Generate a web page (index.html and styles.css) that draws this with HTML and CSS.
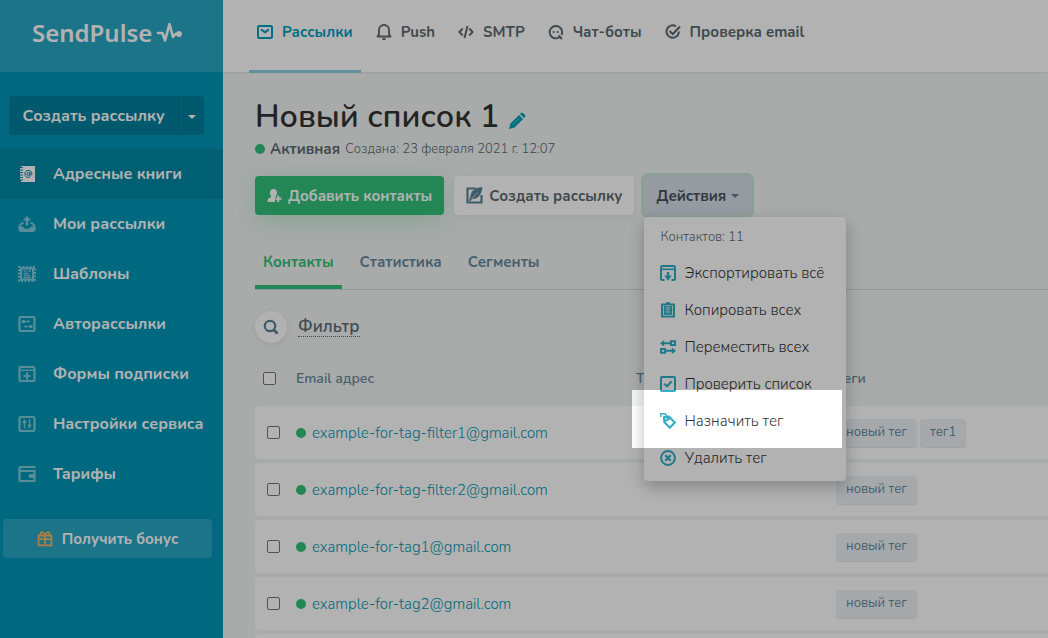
FILE: index.html
```html
<!DOCTYPE html>
<html lang="ru">
<head>
    <meta charset="UTF-8">
    <meta name="viewport" content="width=device-width, initial-scale=1.0">
    <title>Новый список 1</title>
    <link rel="stylesheet" href="styles.css">
</head>
<body>
    <div class="layout">
        <aside class="sidebar">
            <a class="logo" href="#">
                <span>SendPulse</span>
                <svg width="26" height="24" viewBox="0 0 26 24" fill="none" stroke="currentColor" stroke-width="2.600" stroke-linejoin="round" stroke-linecap="round"><path d="M2 12h4.500l2.500 7.500L13.500 3l3.500 13 2.500-3h3"/><circle cx="23" cy="13" r="1.600" fill="currentColor"/></svg>
            </a>
            <div class="create">
                <button class="create-main">Создать рассылку</button>
                <button class="create-more" aria-label="Ещё"><span class="caret"></span></button>
            </div>
            <nav class="menu">
                <a class="menu-item active" href="#">
                    <svg width="18" height="16" viewBox="0 0 18 16"><path fill="currentColor" d="M3 0h14v16H3v-1.500h2v-1H2V12h3v-1H2V9.500h3v-1H2V7h3V6H2V4.500h3v-1H2V2h3V1H3z"/><g fill="none" stroke="#0088a4" stroke-width="1"><circle cx="10.500" cy="8" r="1.500"/><path d="M12 6.300v2.200c0 1.200 1.900 1 1.900-.6a3.500 3.500 0 1 0-1.500 2.900"/></g></svg>
                    Адресные книги
                </a>
                <a class="menu-item" href="#">
                    <svg width="18" height="16" viewBox="0 0 18 16" fill="none" stroke="currentColor"><path stroke-width="2.500" d="M9 9.500V3"/><path fill="currentColor" stroke="none" d="M9 0l4.200 4.500H4.800z"/><path stroke-width="2" stroke-linejoin="round" d="M5.500 6.800C3 7.300 1.300 10 1.200 12c0 2 1 3 2.500 3h10.600c1.500 0 2.500-1 2.500-3-.1-2-1.800-4.700-4.300-5.200"/><path fill="currentColor" stroke="none" d="M1.500 10.500H5c1 2 2 2.200 4 2.200s3-.2 4-2.200h3.500V15h-15z"/></svg>
                    Мои рассылки
                </a>
                <a class="menu-item" href="#">
                    <svg width="18" height="16" viewBox="0 0 18 16" fill="none" stroke="currentColor"><path stroke-width="2" stroke-dasharray="2 1.500" d="M1 1h16v14H1z"/><path stroke-width="2" d="M3 2.500h12v11H3z"/><path stroke-width="1.300" d="M5.500 5.200h3M10 5.200h3M5.500 7.300h5M5.500 9.300h7M5.500 11.300h7.500"/></svg>
                    Шаблоны
                </a>
                <a class="menu-item" href="#">
                    <svg width="18" height="16" viewBox="0 0 18 16" fill="none" stroke="currentColor"><rect x="1.500" y="1" width="15" height="14" rx="1.500" stroke-width="2.200"/><path stroke-width="1.200" d="M5 5.500h6M7 10.500h6"/><path fill="currentColor" stroke="none" d="M4 4h3v3H4zM9.500 4l3 1.500-3 1.500zM11.500 9h3v3h-3zM8.500 9L5.500 10.500l3 1.500z"/></svg>
                    Авторассылки
                </a>
                <a class="menu-item" href="#">
                    <svg width="18" height="16" viewBox="0 0 18 16" fill="none" stroke="currentColor"><rect x="1.500" y="1" width="15" height="14" rx="1.500" stroke-width="2.200"/><path stroke-width="1.400" d="M2 4.300h14"/><path stroke-width="2.200" d="M9 6.500v7M5.500 10h7"/></svg>
                    Формы подписки
                </a>
                <a class="menu-item" href="#">
                    <svg width="18" height="16" viewBox="0 0 18 16" fill="none" stroke="currentColor"><rect x="1.500" y="1" width="15" height="14" rx="1.500" stroke-width="2.200"/><path stroke-width="1.400" d="M6.500 3.500v9M11.500 3.500v9"/><path stroke-width="2.200" d="M4.700 6.200h3.600M9.700 9.500h3.600"/></svg>
                    Настройки сервиса
                </a>
                <a class="menu-item" href="#">
                    <svg width="18" height="16" viewBox="0 0 18 16" fill="none" stroke="currentColor"><path stroke-width="2.200" d="M17.500 1H3Q1.500 1 1.500 2.500v11Q1.500 15 3 15h13.500V5H2"/><path fill="currentColor" stroke="none" d="M17 8h-4.500a2 2 0 0 0 0 4H17z"/></svg>
                    Тарифы
                </a>
            </nav>
            <button class="bonus">
                <svg width="16" height="16" viewBox="0 0 16 16" fill="none" stroke="currentColor" stroke-width="1.700" stroke-linejoin="round"><path d="M1.500 4.700h13v9.600h-13zM8 4.700v9.600M1.500 8.200h13M8 4.500C7 1 3.500 0 3.500 2.800c0 1 .5 1.700 1 1.900M8 4.500C9 1 12.500 0 12.500 2.800c0 1-.5 1.700-1 1.900"/></svg>
                Получить бонус
            </button>
        </aside>

        <div class="page">
            <header class="topbar">
                <a class="topbar-item active" href="#">
                    <svg width="16" height="16" viewBox="0 0 16 16" fill="none" stroke="currentColor" stroke-width="2"><rect x="1" y="2" width="14" height="12" rx="1"/><path d="M4 5.500l4 2.700 4-2.700"/></svg>
                    Рассылки
                </a>
                <a class="topbar-item" href="#">
                    <svg width="16" height="16" viewBox="0 0 16 16" fill="none" stroke="currentColor" stroke-width="1.800"><path stroke-linejoin="round" d="M1.500 12.500h13L13 10V6a5 5 0 0 0-10 0v4z"/><path stroke-width="2" d="M6.500 15h3"/></svg>
                    Push
                </a>
                <a class="topbar-item" href="#">
                    <svg width="16" height="16" viewBox="0 0 16 16" fill="none" stroke="currentColor" stroke-width="1.900"><path d="M4.800 4.500L1.300 8l3.500 3.500M11.200 4.500L14.700 8l-3.500 3.500M9.500 2l-3 12"/></svg>
                    SMTP
                </a>
                <a class="topbar-item" href="#">
                    <svg width="16" height="16" viewBox="0 0 16 16" fill="none" stroke="currentColor" stroke-width="1.900"><path d="M11.500 13.200A6.200 6.200 0 1 1 13.400 11M10.500 11.500l3.500 3.500"/><path stroke-width="2" d="M4.800 8h1.600M8.800 8h1.600"/></svg>
                    Чат-боты
                </a>
                <a class="topbar-item" href="#">
                    <svg width="16" height="16" viewBox="0 0 16 16" fill="none" stroke="currentColor" stroke-width="2"><path d="M11 2.300A6.200 6.200 0 1 0 13.900 7.500M4.500 7l3.300 3L15 2.500"/></svg>
                    Проверка email
                </a>
            </header>

            <main class="content">
                <div class="title-row">
                    <h1>Новый список 1</h1>
                    <a class="edit" href="#" aria-label="Изменить">
                        <svg width="18" height="18" viewBox="0 0 18 18"><path fill="currentColor" d="M1 17l1.500-5.500L11 3l4 4-8.500 8.500zM12 2l1-1q1-.7 2 0l2 2q.7 1 0 2l-1 1z"/><path stroke="#f1f5f4" stroke-width=".5" d="M5 12.500l6-6"/></svg>
                    </a>
                </div>
                <div class="status">
                    <span class="dot"></span>
                    <strong>Активная</strong>
                    <span class="created">Создана: 23 февраля 2021 г. 12:07</span>
                </div>

                <div class="actions">
                    <button class="btn btn-green">
                        <svg width="15" height="15" viewBox="0 0 15 15" fill="currentColor"><path d="M6.500 1C9 1 10.300 2.800 10 5c-.2 1.700-.8 2.500-1.200 3v1.200H8V14H.5c0-3 .5-3.700 3.500-4.700V8C3.200 7 3 6 3 4.500 3 2.500 4.300 1 6.500 1z"/><path d="M10.200 7.500h2v2.300H14.500v2h-2.300V14h-2v-2.200H8.500v-2h1.700z"/></svg>
                        Добавить контакты
                    </button>
                    <button class="btn btn-white">
                        <svg width="17" height="17" viewBox="0 0 17 17" fill="none" stroke="currentColor"><path stroke-width="2.200" d="M10 1.500H1.500v14h14V8"/><path fill="currentColor" stroke="none" d="M16.500 0C10 .5 5 3.500 4.500 9L3 13.500l1.200.8L6.500 12C12 12.500 15.800 7 16.500 0z"/><path stroke="#fff" stroke-width=".6" d="M5 12.500L11.500 5.500"/></svg>
                        Создать рассылку
                    </button>
                    <div class="dropdown">
                        <button class="btn btn-actions">Действия <span class="caret"></span></button>
                        <div class="dropdown-menu">
                            <div class="dropdown-header">Контактов: 11</div>
                            <a class="dropdown-item" href="#">
                                <svg width="16" height="16" viewBox="0 0 16 16" fill="none" stroke="currentColor"><path stroke-width="2" d="M4.500 15H2.500Q1 15 1 13.500v-11Q1 1 2.500 1h11Q15 1 15 2.500v11q0 1.500-1.500 1.500h-2"/><path stroke-width="1.600" d="M1 4.300h14"/><path stroke-width="2.400" d="M8 7v5"/><path fill="currentColor" stroke="none" d="M4.200 10.500h7.600L8 15.800z"/></svg>
                                Экспортировать всё
                            </a>
                            <a class="dropdown-item" href="#">
                                <svg width="16" height="16" viewBox="0 0 16 16"><path fill="currentColor" d="M1 1.500h4.500Q5.500 0 8 0t2.500 1.500H15v14H1z"/><path fill="none" stroke="#fff" stroke-width=".8" d="M4.500 3.500h-1v9.800h9V3.500h-1M5.500 3.700h5M5.500 6h5M5.500 8h4M5.500 10h5"/></svg>
                                Копировать всех
                            </a>
                            <a class="dropdown-item" href="#">
                                <svg width="16" height="16" viewBox="0 0 16 16" fill="none" stroke="currentColor" stroke-width="2"><path d="M11 2.300h4v3.700h-4zM1 10h4v3.700H1zM2.500 4.200H11M5 11.800h8"/><path fill="currentColor" stroke="none" d="M0 4.200L4.200 1v6.400zM16 11.800l-4.200-3.200V15z"/></svg>
                                Переместить всех
                            </a>
                            <a class="dropdown-item" href="#">
                                <svg width="16" height="16" viewBox="0 0 16 16" fill="none" stroke="currentColor" stroke-width="2"><rect x="1" y="1" width="14" height="14" rx="1"/><path d="M4.300 7.700L7 10.300l4.700-5"/></svg>
                                Проверить список
                            </a>
                            <a class="dropdown-item current" href="#">
                                <svg width="16" height="16" viewBox="0 0 16 16" fill="none" stroke="currentColor"><path stroke-width="2" stroke-linejoin="round" d="M3.800 4.200l5-.7 6 6-5 5.300-5.500-5.800z"/><path fill="currentColor" stroke="none" d="M3.500 3.500l5.200-.4 1 4L5 9z"/><path stroke-width="1.400" d="M.8 4V.8h4.400l2.500 3.600"/><circle cx="6" cy="5.800" r=".8" fill="#fff" stroke="none"/></svg>
                                Назначить тег
                            </a>
                            <a class="dropdown-item" href="#">
                                <svg width="16" height="16" viewBox="0 0 16 16" fill="none" stroke="currentColor"><circle cx="8" cy="8" r="6.900" stroke-width="2"/><path stroke-width="2.300" d="M5.300 5.300l5.400 5.400M10.700 5.300l-5.400 5.400"/></svg>
                                Удалить тег
                            </a>
                        </div>
                    </div>
                </div>

                <nav class="tabs">
                    <a class="tab active" href="#">Контакты</a>
                    <a class="tab" href="#">Статистика</a>
                    <a class="tab" href="#">Сегменты</a>
                </nav>

                <div class="filter">
                    <button class="search" aria-label="Поиск">
                        <svg width="16" height="16" viewBox="0 0 16 16" fill="none" stroke="currentColor"><circle cx="7" cy="7" r="5.200" stroke-width="2.200"/><path stroke-width="2.800" stroke-linecap="round" d="M11 11l2.700 2.700"/></svg>
                    </button>
                    <a class="filter-link" href="#">Фильтр</a>
                </div>

                <table class="contacts">
                    <thead>
                        <tr>
                            <th class="col-check"><input type="checkbox" aria-label="Выбрать все"></th>
                            <th class="col-email">Email адрес</th>
                            <th class="col-phone">Телефон</th>
                            <th>Теги</th>
                        </tr>
                    </thead>
                    <tbody>
                        <tr>
                            <td><input type="checkbox" aria-label="example-for-tag-filter1@gmail.com"></td>
                            <td><span class="dot"></span><a href="#">example-for-tag-filter1@gmail.com</a></td>
                            <td></td>
                            <td><div class="tags"><span class="tag">новый тег</span><span class="tag">тег1</span></div></td>
                        </tr>
                        <tr>
                            <td><input type="checkbox" aria-label="example-for-tag-filter2@gmail.com"></td>
                            <td><span class="dot"></span><a href="#">example-for-tag-filter2@gmail.com</a></td>
                            <td></td>
                            <td><div class="tags"><span class="tag">новый тег</span></div></td>
                        </tr>
                        <tr>
                            <td><input type="checkbox" aria-label="example-for-tag1@gmail.com"></td>
                            <td><span class="dot"></span><a href="#">example-for-tag1@gmail.com</a></td>
                            <td></td>
                            <td><div class="tags"><span class="tag">новый тег</span></div></td>
                        </tr>
                        <tr>
                            <td><input type="checkbox" aria-label="example-for-tag2@gmail.com"></td>
                            <td><span class="dot"></span><a href="#">example-for-tag2@gmail.com</a></td>
                            <td></td>
                            <td><div class="tags"><span class="tag">новый тег</span></div></td>
                        </tr>
                        <tr>
                            <td></td>
                            <td></td>
                            <td></td>
                            <td></td>
                        </tr>
                    </tbody>
                </table>
            </main>
        </div>
    </div>
</body>
</html>
```
FILE: styles.css
```css
* {
    box-sizing: border-box;
}
body {
    margin: 0;
    height: 100vh;
    overflow: hidden;
    font-family: Nunito, "Open Sans", "Noto Sans", sans-serif;
    font-size: 15px;
    line-height: 20px;
    color: #5c6a70;
    background: #f1f5f4;
}
a {
    color: inherit;
    text-decoration: none;
}
button {
    font: inherit;
    color: inherit;
    border: none;
    cursor: pointer;
}
svg {
    flex: none;
}
.layout {
    display: flex;
    min-height: 100vh;
}

/* sidebar */
.sidebar {
    flex: none;
    width: 223px;
    background: #0097b7;
    color: #fff;
    font-weight: 700;
}
.logo {
    display: flex;
    align-items: center;
    gap: 4px;
    height: 72px;
    padding: 0 0 6px 32px;
    background: #29a7c4;
    font-family: "Noto Sans", sans-serif;
    font-size: 24px;
    font-weight: 600;
}
.create {
    display: flex;
    margin: 24px 19px 14px 9px;
    border-radius: 4px;
    background: #00809b;
}
.create button {
    height: 39px;
    padding: 0;
    background: none;
    font-size: 16px;
}
.create .create-main {
    flex: 1;
}
.create .create-more {
    width: 26px;
    border-left: 1px solid #00758e;
}
.caret {
    display: inline-block;
    border: 4px solid transparent;
    border-top-color: currentColor;
    border-bottom: 0;
    vertical-align: middle;
}
.menu-item {
    display: flex;
    align-items: center;
    gap: 17px;
    height: 50px;
    padding-left: 18px;
    font-size: 16px;
}
.menu-item svg {
    opacity: .5;
}
.menu-item.active {
    background: #0088a4;
}
.menu-item.active svg {
    opacity: 1;
}
.bonus {
    display: flex;
    align-items: center;
    justify-content: center;
    gap: 9px;
    width: 209px;
    height: 39px;
    margin: 20px 3px;
    border-radius: 4px;
    background: #29a7c4;
    color: #fff;
}
.bonus svg {
    color: #ffb45c;
}

/* top navigation */
.page {
    flex: 1;
    min-width: 0;
}
.topbar {
    display: flex;
    gap: 7px;
    height: 72px;
    padding-left: 26px;
    background: #fff;
    box-shadow: 0 1px 2px rgba(0, 0, 0, .08);
}
.topbar-item {
    display: flex;
    align-items: center;
    gap: 9px;
    height: 73px;
    padding: 0 8px 6px;
    font-weight: 700;
    border-bottom: 3px solid transparent;
}
.topbar-item.active {
    color: #009fc0;
    border-bottom-color: #8fd0df;
}

/* page head */
.content {
    padding: 25px 0 0 32px;
}
.title-row {
    display: flex;
    align-items: center;
    gap: 9px;
}
h1 {
    margin: 0;
    font-size: 32px;
    line-height: 40px;
    font-weight: 600;
    color: #333;
}
.edit {
    display: flex;
    padding-top: 8px;
    color: #009fba;
}
.status {
    display: flex;
    align-items: center;
    gap: 5px;
    margin: 2px 0 17px;
}
.created {
    font-size: 13px;
    font-weight: 300;
}
.dot {
    display: inline-block;
    width: 10px;
    height: 10px;
    border-radius: 50%;
    background: #32c27a;
}
.actions {
    display: flex;
    gap: 10px;
}
.btn {
    display: flex;
    align-items: center;
    gap: 6px;
    height: 39px;
    padding: 0 12px;
    border-radius: 4px;
    font-weight: 700;
    white-space: nowrap;
}
.btn-green {
    background: #32c27a;
    color: #fff;
    box-shadow: 0 6px 24px rgba(50, 194, 122, .25);
}
.btn-white {
    background: #fff;
    box-shadow: 0 2px 6px rgba(0, 0, 0, .06);
}
.btn-white svg {
    color: #5e8397;
}
.btn-actions {
    gap: 5px;
    background: #d6dfe6;
    color: #45525a;
    box-shadow: 0 0 0 3px #c8e4d5;
}
.btn-actions .caret {
    color: #5e8397;
}

/* actions menu */
.dropdown {
    position: relative;
}
.dropdown-menu {
    position: absolute;
    top: 41px;
    left: 0;
    z-index: 10;
    width: 202px;
    padding: 5px 0;
    border-radius: 4px;
    background: #fff;
    box-shadow: 0 6px 16px rgba(0, 0, 0, .25);
}
.dropdown-header {
    padding: 5px 16px 7px;
    font-size: 13px;
    font-weight: 300;
}
.dropdown-item {
    display: flex;
    align-items: center;
    gap: 8px;
    height: 37px;
    padding: 0 16px;
    color: #333;
    font-weight: 300;
    white-space: nowrap;
}
.dropdown-item svg {
    color: #2faec5;
}
.dropdown-item.current {
    position: relative;
}
/* dims everything around the current item */
.dropdown-item.current::after {
    content: "";
    position: absolute;
    inset: -12px 4px -9px -12px;
    box-shadow: 0 0 0 2000px rgba(0, 0, 0, .3);
    pointer-events: none;
}

/* tabs and filter */
.tabs {
    display: flex;
    gap: 10px;
    margin-top: 26px;
    border-bottom: 1px solid #cddadd;
}
.tab {
    height: 48px;
    padding: 11px 8px;
    border-bottom: 4px solid transparent;
    color: #66899c;
    font-weight: 700;
}
.tab.active {
    color: #32c27a;
    border-bottom-color: #32c27a;
}
.filter {
    display: flex;
    align-items: center;
    gap: 11px;
    margin: 21px 0 22px;
}
.search {
    display: flex;
    align-items: center;
    justify-content: center;
    width: 32px;
    height: 32px;
    padding: 0;
    border-radius: 50%;
    background: #fff;
    color: #5e8397;
    box-shadow: 0 2px 6px rgba(0, 0, 0, .08);
}
.filter-link {
    border-bottom: 1px dotted #637177;
    font-size: 17px;
    line-height: 18px;
    font-weight: 600;
}

/* contacts table */
.contacts {
    width: 100%;
    border-spacing: 0 4px;
    table-layout: fixed;
    margin-top: -4px;
}
.contacts th {
    height: 37px;
    padding: 0 0 10px;
    text-align: left;
    font-size: 14px;
    font-weight: 600;
    color: #66899c;
}
.contacts .col-check {
    width: 41px;
    padding-left: 8px;
}
.contacts .col-email {
    width: 340px;
}
.contacts .col-phone {
    width: 200px;
}
.contacts td {
    height: 53px;
    padding: 0;
    background: #fff;
}
.contacts td:first-child {
    padding-left: 12px;
    border-radius: 4px 0 0 4px;
}
.contacts td a {
    color: #0099b3;
    font-weight: 300;
}
.contacts .dot {
    margin-right: 6px;
}
.contacts input {
    appearance: none;
    display: block;
    width: 13px;
    height: 13px;
    margin: 0;
    border: 1px solid #767676;
    border-radius: 2px;
    background: #fff;
}
.tags {
    display: flex;
    gap: 3px;
}
.tag {
    padding: 3px 10px 5px;
    border-radius: 4px;
    background: #edf3f7;
    box-shadow: 0 1px 1px rgba(0, 0, 0, .1);
    font-size: 13px;
    color: #66899c;
}
```
